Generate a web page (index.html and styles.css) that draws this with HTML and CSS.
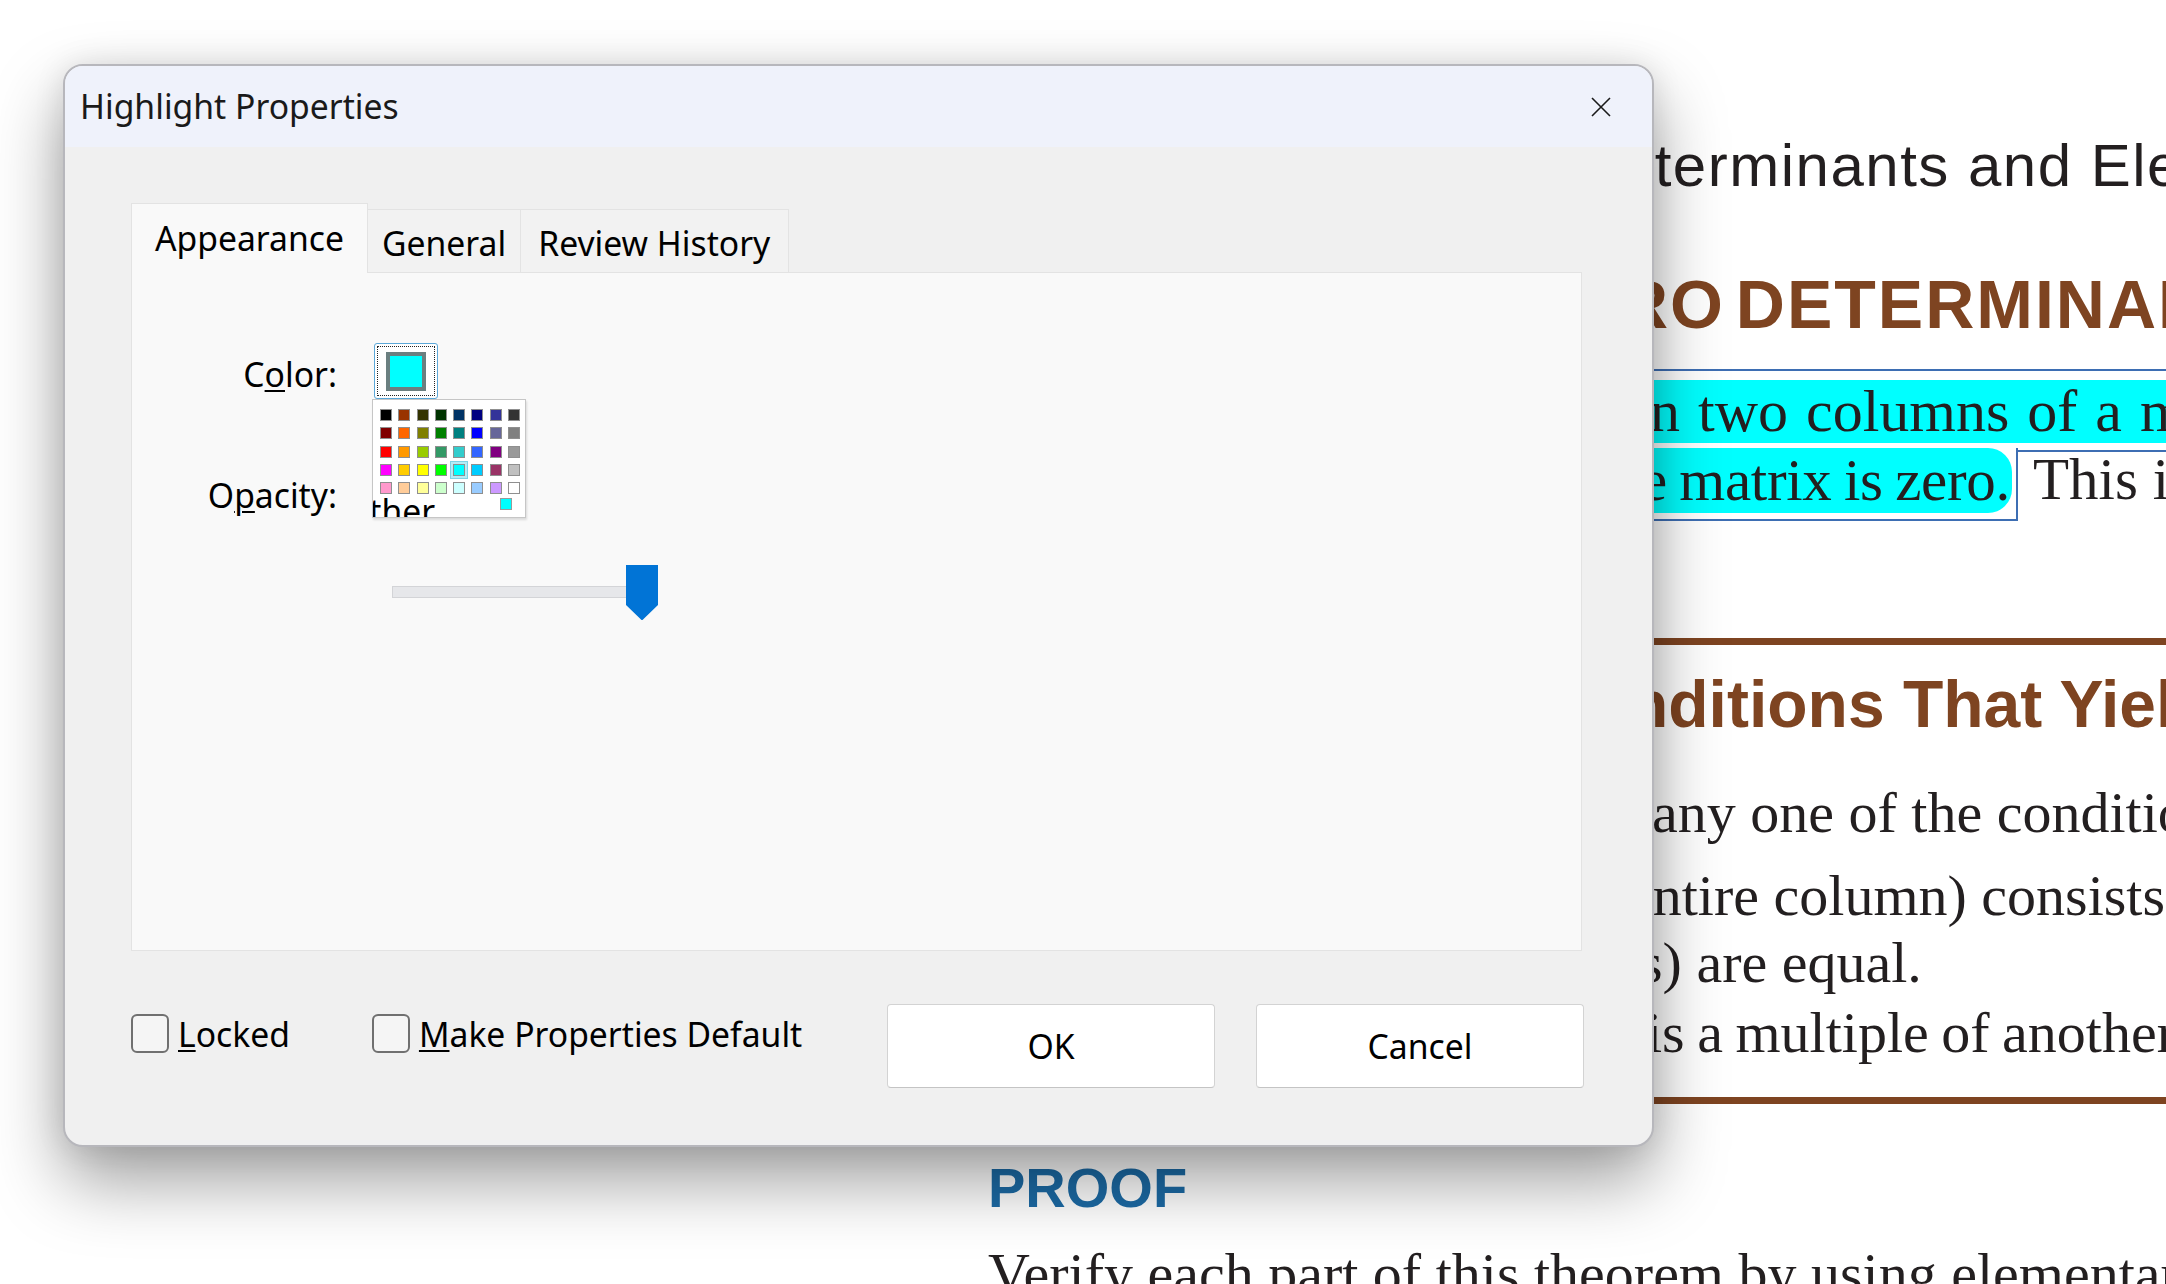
FILE: index.html
```html
<!DOCTYPE html>
<html lang="en">
<head>
    <meta charset="UTF-8">
    <meta name="viewport" content="width=device-width, initial-scale=1.0">
    <title>Highlight Properties</title>
    <link rel="stylesheet" href="styles.css">
</head>
<body>

    <!-- PDF page behind the dialog -->
    <div class="doc">
        <div class="doc-right">
            <div class="running-head">Determinants and Elementary Matrices</div>
            <h2 class="section-title">ZERO DETERMINANTS</h2>

            <!-- highlight annotation, selected -->
            <div class="annot">
                <div class="hl-line1">n two columns of a matrix are proportional, then the</div>
                <div class="hl-row2">
                    <div class="hl-left"><span class="hl-end">e matrix is zero.</span></div>
                    <div class="hl-rest">This is a consequence of the following theorem.</div>
                </div>
            </div>

            <div class="rule"></div>
            <h3 class="box-title">Conditions That Yield a Zero Determinant</h3>
            <p class="line l1">any one of the conditions below holds, then det(A) = 0.</p>
            <p class="line l2">entire column) consists of zeros.</p>
            <p class="line l3">s) are equal.</p>
            <p class="line l4">is a multiple of another row (column).</p>
            <div class="rule rule-bottom"></div>
        </div>
        <h4 class="proof">PROOF</h4>
        <p class="line verify">Verify each part of this theorem by using elementary row operations.</p>
    </div>

    <!-- Highlight Properties dialog -->
    <div class="dialog">
        <div class="titlebar">
            <span class="title">Highlight Properties</span>
            <button class="close" aria-label="Close">
                <svg width="20" height="20" viewBox="0 0 20 20"><path d="M1 1L19 19M19 1L1 19" stroke="#1a1a1a" stroke-width="1.6" fill="none"/></svg>
            </button>
        </div>

        <div class="dialog-body">
            <div class="tabs">
                <div class="tab active">Appearance</div>
                <div class="tab">General</div>
                <div class="tab tab-wide">Review History</div>
            </div>

            <div class="panel">
                <div class="field color-field">
                    <label class="label">C<u>o</u>lor:</label>
                    <button class="color-btn"><span class="focus-ring"><span class="swatch-big"></span></span></button>
                </div>

                <div class="field opacity-field">
                    <label class="label">O<u>p</u>acity:</label>
                </div>

                <div class="slider">
                    <div class="track"></div>
                    <svg class="thumb" width="32" height="55" viewBox="0 0 32 55"><path d="M0 0H32V40L17 54.5Q16 55.5 15 54.5L0 40Z" fill="#0174d6"/></svg>
                </div>

                <!-- colour dropdown, open -->
                <div class="palette">
                    <div class="swatches">
                        <span class="sw" style="background:#000000"></span>
                        <span class="sw" style="background:#993300"></span>
                        <span class="sw" style="background:#333300"></span>
                        <span class="sw" style="background:#003300"></span>
                        <span class="sw" style="background:#003366"></span>
                        <span class="sw" style="background:#000080"></span>
                        <span class="sw" style="background:#333399"></span>
                        <span class="sw" style="background:#333333"></span>

                        <span class="sw" style="background:#800000"></span>
                        <span class="sw" style="background:#ff6600"></span>
                        <span class="sw" style="background:#808000"></span>
                        <span class="sw" style="background:#008000"></span>
                        <span class="sw" style="background:#008080"></span>
                        <span class="sw" style="background:#0000ff"></span>
                        <span class="sw" style="background:#666699"></span>
                        <span class="sw" style="background:#808080"></span>

                        <span class="sw" style="background:#ff0000"></span>
                        <span class="sw" style="background:#ff9900"></span>
                        <span class="sw" style="background:#99cc00"></span>
                        <span class="sw" style="background:#339966"></span>
                        <span class="sw" style="background:#33cccc"></span>
                        <span class="sw" style="background:#3366ff"></span>
                        <span class="sw" style="background:#800080"></span>
                        <span class="sw" style="background:#999999"></span>

                        <span class="sw" style="background:#ff00ff"></span>
                        <span class="sw" style="background:#ffcc00"></span>
                        <span class="sw" style="background:#ffff00"></span>
                        <span class="sw" style="background:#00ff00"></span>
                        <span class="sw selected" style="background:#00ffff"></span>
                        <span class="sw" style="background:#00ccff"></span>
                        <span class="sw" style="background:#993366"></span>
                        <span class="sw" style="background:#c0c0c0"></span>

                        <span class="sw" style="background:#ff99cc"></span>
                        <span class="sw" style="background:#ffcc99"></span>
                        <span class="sw" style="background:#ffff99"></span>
                        <span class="sw" style="background:#ccffcc"></span>
                        <span class="sw" style="background:#ccffff"></span>
                        <span class="sw" style="background:#99ccff"></span>
                        <span class="sw" style="background:#cc99ff"></span>
                        <span class="sw" style="background:#ffffff"></span>
                    </div>
                    <div class="other">Other</div>
                    <span class="current"></span>
                </div>
            </div>

            <div class="dialog-footer">
                <label class="check"><span class="box"></span><span class="check-text"><u>L</u>ocked</span></label>
                <label class="check"><span class="box"></span><span class="check-text"><u>M</u>ake Properties Default</span></label>
                <div class="buttons">
                    <button class="btn">OK</button>
                    <button class="btn">Cancel</button>
                </div>
            </div>
        </div>
    </div>

</body>
</html>
```

FILE: styles.css
```css
body {
    margin: 0;
    width: 2166px;
    height: 1284px;
    overflow: hidden;
    position: relative;
    background-color: #fff;
    font-family: "Noto Sans", sans-serif;
}

/* ---- pdf page ---- */
.doc {
    padding-left: 988px;
    padding-top: 131px;
    white-space: nowrap;
    color: #231f20;
}
.doc-right {
    margin-left: 632px;
}
.running-head {
    font: 60px/70px "Liberation Sans", Arial, sans-serif;
    letter-spacing: 1.5px;
    text-indent: -45px;
}
.section-title {
    margin: 63px 0 0;
    font: bold 68px/80px "Liberation Sans", Arial, sans-serif;
    color: #7e4421;
    letter-spacing: 2px;
    text-indent: -92px;
    word-spacing: -10px;
}
.annot {
    margin-top: 25px;
    border-top: 2px solid #3d6eb3;
    padding-top: 9px;
    font-family: "Liberation Serif", "Times New Roman", serif;
}
.hl-line1 {
    height: 63px;
    font-size: 60px;
    line-height: 63px;
    background-color: #00ffff;
    text-indent: 30px;
    word-spacing: 3px;
    margin-bottom: 5px;
}
.hl-row2 {
    display: flex;
    align-items: flex-start;
}
.hl-left {
    flex: none;
    padding-right: 4px;
    padding-bottom: 6px;
    border-right: 2px solid #3d6eb3;
    border-bottom: 2px solid #3d6eb3;
}
.hl-end {
    display: block;
    height: 65px;
    font-size: 59px;
    line-height: 65px;
    padding-left: 21px;
    padding-right: 2px;
    word-spacing: -2px;
    letter-spacing: -0.3px;
    background-color: #00ffff;
    border-radius: 0 24px 24px 0;
}
.hl-rest {
    flex: 1;
    margin-top: 2px;
    border-top: 2px solid #3d6eb3;
    padding-left: 15px;
    font-size: 59px;
    line-height: 55px;
}
.rule {
    height: 7px;
    margin-top: 117px;
    background-color: #7e4421;
}
.box-title {
    margin: 21px 0 0;
    font: bold 66px/76px "Liberation Sans", Arial, sans-serif;
    color: #7e4421;
    text-indent: -80px;
}
.line {
    margin: 0;
    font: 58px/68px "Liberation Serif", "Times New Roman", serif;
}
.l1 { margin-top: 37px; text-indent: 32px; }
.l2 { margin-top: 15px; text-indent: 7px; }
.l3 { margin-top: -1px; text-indent: 20px; }
.l4 { margin-top: 2px; text-indent: 26px; word-spacing: -2px; }
.rule-bottom {
    margin-top: 30px;
}
.proof {
    margin: 52px 0 0;
    font: bold 56px/64px "Liberation Sans", Arial, sans-serif;
    color: #1c6ba6;
}
.verify {
    margin-top: 20px;
}

/* ---- dialog ---- */
.dialog {
    position: absolute;
    left: 63px;
    top: 64px;
    width: 1591px;
    box-sizing: border-box;
    background-color: #f0f0f0;
    border: 2px solid #b7b7bc;
    border-radius: 20px;
    overflow: hidden;
    box-shadow: 0 34px 70px rgba(0,0,0,0.38), 0 0 30px rgba(0,0,0,0.10);
    color: #000;
    font-size: 33.7px;
    line-height: 45px;
}
.titlebar {
    height: 81px;
    display: flex;
    align-items: center;
    justify-content: space-between;
    padding: 0 41px 0 15px;
    background-color: #eff2fb;
}
.title {
    color: #1a1a1a;
}
.close {
    display: flex;
    width: 20px;
    height: 20px;
    padding: 0;
    border: none;
    background: none;
}
.dialog-body {
    padding: 56px 70px 57px 66px;
}
.tabs {
    display: flex;
    align-items: flex-end;
    height: 69px;
}
.tab {
    box-sizing: border-box;
    height: 63px;
    padding: 11px 14px 0;
    background-color: #f2f2f2;
    border: 1px solid #e3e3e3;
    border-left: none;
    border-bottom: none;
}
.tab-wide {
    padding: 11px 18px 0 17px;
}
.tab.active {
    position: relative;
    z-index: 1;
    height: 70px;
    margin-bottom: -1px;
    padding: 12px 23px 0;
    background-color: #f9f9f9;
    border-left: 1px solid #e3e3e3;
}
.panel {
    position: relative;
    box-sizing: border-box;
    height: 679px;
    padding-top: 70px;
    background-color: #f9f9f9;
    border: 1px solid #e3e3e3;
}
.field {
    display: flex;
    align-items: flex-start;
}
.label {
    width: 205px;
    text-align: right;
}
.label u {
    text-underline-offset: 3px;
    text-decoration-thickness: 1.5px;
}
.color-field .label {
    margin-top: 9px;
}
.color-btn {
    margin-left: 37px;
    width: 64px;
    height: 56px;
    padding: 2px;
    box-sizing: border-box;
    background-color: #fff;
    border: 1px solid #5ba7d8;
    border-radius: 3px;
}
.focus-ring {
    display: flex;
    align-items: center;
    justify-content: center;
    width: 100%;
    height: 100%;
    box-sizing: border-box;
    border: 1px dotted #222;
}
.swatch-big {
    width: 40px;
    height: 39px;
    box-sizing: border-box;
    background-color: #00ffff;
    border: 4px solid #6b7f80;
}
.opacity-field {
    margin-top: 74px;
}
.slider {
    position: relative;
    margin: 47px 0 0 260px;
    width: 266px;
    height: 55px;
}
.track {
    position: absolute;
    left: 0;
    top: 21px;
    width: 250px;
    height: 12px;
    box-sizing: border-box;
    background-color: #e6e7ea;
    border: 1px solid #d3d4d7;
}
.thumb {
    position: absolute;
    left: 234px;
    top: 0;
}
.palette {
    position: absolute;
    left: 240px;
    top: 126px;
    width: 154px;
    height: 119px;
    box-sizing: border-box;
    overflow: hidden;
    background-color: #fff;
    border: 1px solid #c6c6c6;
    box-shadow: 1px 2px 2px rgba(0,0,0,0.12);
}
.swatches {
    display: grid;
    grid-template-columns: repeat(8, 12px);
    column-gap: 6.3px;
    row-gap: 6.3px;
    padding: 9px 0 0 7px;
}
.sw {
    width: 12px;
    height: 12px;
    box-sizing: border-box;
    border: 1px solid #8f8f8f;
}
.sw.selected {
    box-shadow: 0 0 0 2px #b4edf7, 0 0 0 3px #7fd3e5;
}
.other {
    margin: -5px 0 0 -30px;
    white-space: nowrap;
}
.current {
    position: absolute;
    left: 127px;
    top: 98px;
    width: 12px;
    height: 12px;
    box-sizing: border-box;
    background-color: #00ffff;
    border: 1px solid #9a9a9a;
}
.dialog-footer {
    display: flex;
    align-items: flex-start;
    margin: 53px -2px 0 0;
}
.check {
    display: flex;
    align-items: center;
    margin-top: 5px;
}
.check + .check {
    margin-left: 82px;
}
.box {
    width: 38px;
    height: 39px;
    box-sizing: border-box;
    margin-right: 9px;
    border: 2px solid #707070;
    border-radius: 6px;
    background-color: #f5f5f5;
}
.check-text {
    padding-top: 3px;
}
.check-text u {
    text-underline-offset: 3px;
    text-decoration-thickness: 1.5px;
}
.buttons {
    display: flex;
    gap: 41px;
    margin-left: auto;
}
.btn {
    width: 328px;
    height: 84px;
    background-color: #fff;
    border: 1px solid #d3d3d3;
    border-bottom-color: #c4c4c4;
    border-radius: 4px;
    font-family: "Noto Sans", sans-serif;
    font-size: 33.7px;
    color: #000;
}
```
